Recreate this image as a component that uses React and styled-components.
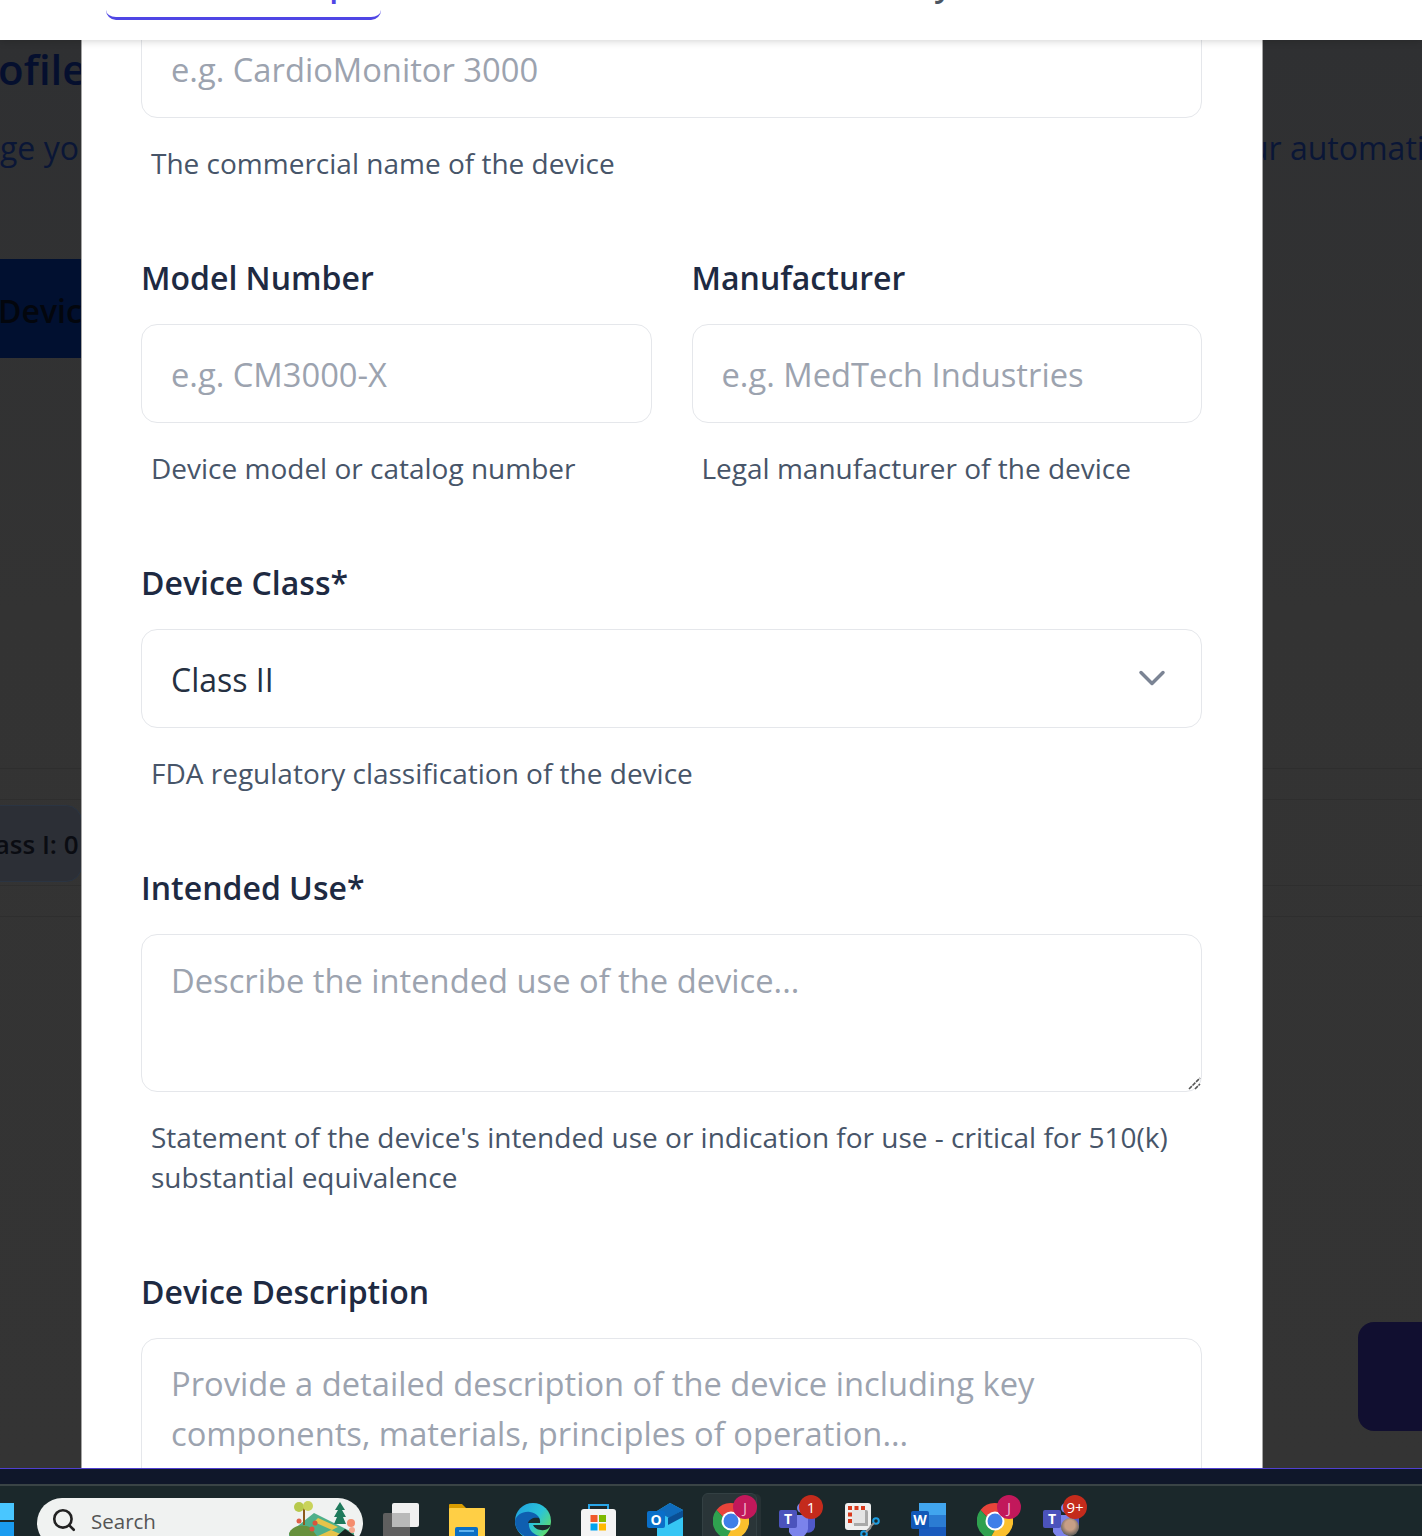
import React from "react";
import styled, { createGlobalStyle } from "styled-components";
import { Search, ChevronDown } from "lucide-react";

const GlobalStyle = createGlobalStyle`
  html, body { margin: 0; padding: 0; }
  body { font-family: "Open Sans", "Noto Sans", sans-serif; background: #0f172a; }
  * { box-sizing: border-box; }
`;

function TaskViewIcon() {
  return (
    <svg width="36" height="36" viewBox="0 0 36 36">
      <rect x="0" y="10" width="27" height="27" rx="2" fill="#5f5f5f" />
      <rect x="9" y="0" width="27" height="24" rx="2" fill="#f0f0f0" />
      <rect x="9" y="10" width="18" height="14" fill="#b9b9b9" />
    </svg>
  );
}

function FolderIcon() {
  return (
    <svg width="36" height="36" viewBox="0 0 36 36">
      <path d="M0 2a1 1 0 0 1 1-1h12l4 4h18a1 1 0 0 1 1 1v6H0z" fill="#d99c00" />
      <rect x="0" y="5" width="36" height="31" rx="1" fill="#ffcf45" />
      <rect x="6" y="24" width="23" height="13" rx="2" fill="#0b6fc4" />
      <rect x="10" y="27" width="15" height="2" fill="#5cb2ee" />
    </svg>
  );
}

function EdgeIcon() {
  return (
    <svg width="36" height="36" viewBox="0 0 36 36">
      <defs>
        <linearGradient id="edgeTop" x1="0" y1="0" x2="1" y2="0.7">
          <stop offset="0" stopColor="#1f9fe0" />
          <stop offset="0.6" stopColor="#2bc3d8" />
          <stop offset="1" stopColor="#5fdc6a" />
        </linearGradient>
      </defs>
      <circle cx="18" cy="18" r="18" fill="url(#edgeTop)" />
      <path d="M0 18c1-6 8-10 15-9 7 1 11 6 10 11H14c-1 6 4 12 11 13-3 2-6 3-9 2C7 34 0 27 0 18z" fill="#0f5fb0" />
      <path d="M13 20c1-4 6-6 11-5 1 2 1 3 1 5z" fill="#1b2a2d" />
      <path d="M36 20c0 5-5 8-10 7-4 0-7-3-8-5h18z" fill="#1b2a2d" />
    </svg>
  );
}

function StoreIcon() {
  return (
    <svg width="36" height="36" viewBox="0 0 36 36">
      <path d="M8 7V2h19v5" fill="none" stroke="#2aa6e8" strokeWidth="2" />
      <rect x="0" y="6" width="35" height="32" rx="3" fill="#f4f4f4" />
      <rect x="9.5" y="12" width="7" height="7" fill="#f0592a" />
      <rect x="18" y="12" width="7" height="7" fill="#7fba00" />
      <rect x="9.5" y="20.5" width="7" height="7" fill="#00a4ef" />
      <rect x="18" y="20.5" width="7" height="7" fill="#ffb900" />
    </svg>
  );
}

function OutlookIcon() {
  return (
    <svg width="36" height="36" viewBox="0 0 36 36">
      <path d="M10 8 23 0l13 7v26a3 3 0 0 1-3 3H13a3 3 0 0 1-3-3z" fill="#35c6f4" />
      <path d="M10 8 23 0l13 7-14 8z" fill="#0f6cbd" />
      <path d="M21 15 36 7v7l-15 8z" fill="#0a4f94" />
      <rect x="0" y="8" width="18" height="17" rx="2" fill="#0a6fc9" />
      <text x="9" y="22" textAnchor="middle" fontSize="14" fontWeight="700" fill="#fff" fontFamily="Open Sans">O</text>
    </svg>
  );
}

function ChromeIcon() {
  return (
    <svg width="36" height="36" viewBox="0 0 36 36">
      <path d="M18 0a18 18 0 0 1 15.6 9H18a9 9 0 0 0-8 5L3.500 7A18 18 0 0 1 18 0z" fill="#e8443a" />
      <path d="M3.500 7 10 14a9 9 0 0 0 8 13l-5 8.500A18 18 0 0 1 3.500 7z" fill="#2fa14f" />
      <path d="M33.600 9A18 18 0 0 1 13 35.500L18 27a9 9 0 0 0 7.800-13.500L33.600 9z" fill="#fbc02d" />
      <circle cx="18" cy="18" r="9.500" fill="#fff" />
      <circle cx="18" cy="18" r="7.500" fill="#3f7fe8" />
    </svg>
  );
}

function TeamsIcon() {
  return (
    <svg width="36" height="36" viewBox="0 0 36 36">
      <circle cx="23" cy="5" r="5" fill="#7b83eb" />
      <circle cx="31" cy="8" r="3.500" fill="#5059c9" />
      <path d="M26 13h8a2 2 0 0 1 2 2v9a7 7 0 0 1-10 5z" fill="#5059c9" />
      <path d="M10 12h17a2 2 0 0 1 2 2v12a10 10 0 0 1-19 3z" fill="#7b83eb" />
      <rect x="0" y="7" width="18" height="18" rx="2" fill="#4b53bc" />
      <text x="9" y="21" textAnchor="middle" fontSize="14" fontWeight="700" fill="#fff" fontFamily="Open Sans">T</text>
    </svg>
  );
}

function SnipIcon() {
  return (
    <svg width="36" height="36" viewBox="0 0 36 36">
      <rect x="0" y="0" width="26" height="27" rx="3" fill="#efefef" />
      <g fill="#d8391c">
        <rect x="3" y="3" width="4" height="4" />
        <rect x="9.500" y="3" width="4" height="4" />
        <rect x="16" y="3" width="4" height="4" />
        <rect x="3" y="9.500" width="4" height="4" />
        <rect x="3" y="16" width="4" height="4" />
      </g>
      <path d="M7 7h14a2 2 0 0 1 2 2v13H9a2 2 0 0 1-2-2z" fill="#e4e4e4" />
      <path d="M20 7h1a2 2 0 0 1 2 2v12h-3zM9 20h14v3H9z" fill="#a9a9a9" />
      <circle cx="31" cy="18" r="2.800" fill="none" stroke="#1b9de2" strokeWidth="2" />
      <circle cx="19" cy="31" r="2.800" fill="none" stroke="#1b9de2" strokeWidth="2" />
      <path d="m21 29 5-5M29 20l-4 4" stroke="#8d8d8d" strokeWidth="2" />
    </svg>
  );
}

function WordIcon() {
  return (
    <svg width="36" height="36" viewBox="0 0 36 36">
      <rect x="8" y="0" width="27" height="12" fill="#41a5ee" />
      <rect x="8" y="12" width="27" height="12" fill="#2b7cd3" />
      <rect x="8" y="24" width="27" height="12" fill="#185abd" />
      <rect x="0" y="8" width="18" height="18" rx="2" fill="#1258b8" />
      <text x="9" y="22" textAnchor="middle" fontSize="14" fontWeight="700" fill="#fff" fontFamily="Open Sans">W</text>
    </svg>
  );
}

function StartIcon() {
  return (
    <svg width="36" height="36" viewBox="0 0 36 36">
      <rect x="19" y="0" width="17" height="17" fill="#49c6ff" />
      <rect x="19" y="19" width="17" height="17" fill="#1a9cf0" />
    </svg>
  );
}

function SearchArt() {
  return (
    <svg width="74" height="38" viewBox="0 0 74 38">
      <path d="M2 35 27 15l40 20v3H2z" fill="#4fb08a" />
      <path d="M31 20 51 29l-6 3-18-8z" fill="#e6c34a" />
      <path d="M31 38l13-6 14 6z" fill="#e6c34a" />
      <path d="M2 36c2-8 14-11 22-6l6 8H3z" fill="#67913c" />
      <rect x="16" y="9" width="2" height="18" fill="#8a5a1c" />
      <circle cx="12" cy="9" r="5" fill="#b7c94c" />
      <circle cx="21" cy="8" r="5" fill="#c9d35a" />
      <path d="M53 4l5 8h-3l4 7h-3l3 7H47l3-7h-3l4-7h-3z" fill="#1f7a5c" />
      <circle cx="64" cy="25" r="4" fill="#f58d6e" />
      <circle cx="65" cy="32" r="3" fill="#f5a78e" />
      <circle cx="12" cy="23" r="2.500" fill="#e0604a" />
      <circle cx="28" cy="25" r="2.500" fill="#d9543e" />
      <circle cx="25" cy="31" r="2.500" fill="#d9543e" />
      <path d="M50 38 58 31l10 7z" fill="#16241f" />
    </svg>
  );
}

const dock = [
  { id: "taskview", Icon: TaskViewIcon },
  { id: "folder", Icon: FolderIcon },
  { id: "edge", Icon: EdgeIcon },
  { id: "store", Icon: StoreIcon },
  { id: "outlook", Icon: OutlookIcon },
  { id: "chrome", Icon: ChromeIcon, badge: "J", tone: "profile", active: true },
  { id: "teams", Icon: TeamsIcon, badge: "1", tone: "alert" },
  { id: "snip", Icon: SnipIcon },
  { id: "word", Icon: WordIcon },
  { id: "chrome2", Icon: ChromeIcon, badge: "J", tone: "profile" },
  { id: "teams2", Icon: TeamsIcon, badge: "9+", tone: "alert", avatar: true },
];

function Field({ label, hint, children }) {
  return (
    <FieldWrap>
      {label && <Label>{label}</Label>}
      {children}
      {hint && <Hint>{hint}</Hint>}
    </FieldWrap>
  );
}

export default function App() {
  return (
    <Screen>
      <GlobalStyle />
      <TopBar>
        <ActiveTab>Device Setup</ActiveTab>
        <Tab>Documents</Tab>
        <Tab>Safety</Tab>
      </TopBar>

      <Stage>
        <PageTitle>Device Profiles</PageTitle>
        <Subtitle>
          <span>Manage your</span>
          <span>your automations</span>
        </Subtitle>
        <DeviceTab>Device</DeviceTab>
        <StatsBand>
          <StatsRow>
            <StatChip>Class I: 0</StatChip>
          </StatsRow>
        </StatsBand>
        <CornerButton />

        <Modal>
          <FormBody>
            <Field hint="The commercial name of the device">
              <TextInput placeholder="e.g. CardioMonitor 3000" />
            </Field>
            <TwoCols>
              <Field label="Model Number" hint="Device model or catalog number">
                <TextInput placeholder="e.g. CM3000-X" />
              </Field>
              <Field label="Manufacturer" hint="Legal manufacturer of the device">
                <TextInput placeholder="e.g. MedTech Industries" />
              </Field>
            </TwoCols>
            <Field label="Device Class*" hint="FDA regulatory classification of the device">
              <ControlWrap>
                <SelectBox defaultValue="II">
                  <option value="I">Class I</option>
                  <option value="II">Class II</option>
                  <option value="III">Class III</option>
                </SelectBox>
                <Chevron size={44} strokeWidth={1.9} />
              </ControlWrap>
            </Field>
            <Field
              label="Intended Use*"
              hint="Statement of the device's intended use or indication for use - critical for 510(k) substantial equivalence"
            >
              <ControlWrap>
                <TextArea placeholder="Describe the intended use of the device..." />
                <ResizeGrip width="13" height="13" viewBox="0 0 13 13">
                  <path d="M1 12 12 1M7 12l5-5" stroke="#555" strokeWidth="1.6" strokeDasharray="4 1" fill="none" />
                </ResizeGrip>
              </ControlWrap>
            </Field>
            <Field label="Device Description">
              <TextArea
                $tall
                placeholder="Provide a detailed description of the device including key components, materials, principles of operation..."
              />
            </Field>
          </FormBody>
        </Modal>
      </Stage>

      <AccentLine />
      <Strip />

      <Taskbar>
        <StartSlot>
          <StartIcon />
        </StartSlot>
        <SearchPill>
          <Search size={26} strokeWidth={2.4} color="#222" />
          <SearchText>Search</SearchText>
          <ArtSlot>
            <SearchArt />
          </ArtSlot>
        </SearchPill>
        <Dock>
          {dock.map(({ id, Icon, badge, tone, active, avatar }) => (
            <DockItem key={id} $active={active}>
              <Icon />
              {avatar && <Avatar />}
              {badge && <Badge $tone={tone}>{badge}</Badge>}
            </DockItem>
          ))}
        </Dock>
      </Taskbar>
    </Screen>
  );
}

const Screen = styled.div`
  width: 1422px;
  height: 1536px;
  display: flex;
  flex-direction: column;
  overflow: hidden;
`;

const TopBar = styled.header`
  height: 40px;
  flex: none;
  background: #fff;
  display: flex;
  align-items: flex-end;
  gap: 95px;
  padding-left: 106px;
  overflow: hidden;
  position: relative;
  z-index: 2;
  box-shadow: 0 1px 8px rgba(0, 0, 0, 0.18);
  clip-path: inset(0 0 -12px 0);
`;

const Tab = styled.div`
  flex: none;
  height: 60px;
  margin-bottom: 20px;
  padding: 0 36px;
  font-size: 32px;
  line-height: 48px;
  font-weight: 600;
  color: #4b5563;
  white-space: nowrap;
`;

const ActiveTab = styled(Tab)`
  width: 275px;
  padding: 0 0 0 12px;
  text-align: center;
  color: #4f46e5;
  border-bottom: 3px solid #4f46e5;
  border-radius: 0 0 10px 10px;
`;

const Stage = styled.main`
  flex: none;
  height: 1428px;
  position: relative;
  overflow: hidden;
  background: linear-gradient(#2f3032, #333 40%, #343434);
  display: flex;
  flex-direction: column;
`;

const PageTitle = styled.h1`
  margin: 0 0 0 -191px;
  height: 58px;
  font-size: 42px;
  line-height: 58px;
  font-weight: 600;
  color: #050f2e;
  white-space: nowrap;
`;

const Subtitle = styled.p`
  margin: 28px 0 0 -84px;
  height: 44px;
  font-size: 32px;
  line-height: 44px;
  color: #0a1636;
  white-space: nowrap;
  display: flex;
  gap: 1102px;
`;

const DeviceTab = styled.div`
  margin-top: 89px;
  width: 120px;
  height: 99px;
  text-indent: -2px;
  background: #011030;
  color: #03060d;
  font-size: 32px;
  font-weight: 600;
  line-height: 103px;
  white-space: nowrap;
`;

const StatsBand = styled.section`
  margin-top: 410px;
  padding: 30px 0;
  border-top: 1px solid #2e2e2e;
  border-bottom: 1px solid #2e2e2e;
`;

const StatsRow = styled.div`
  height: 87px;
  padding: 5px 0;
  border-top: 1px solid #2e2e2e;
  border-bottom: 1px solid #2e2e2e;
`;

const StatChip = styled.div`
  width: 120px;
  height: 77px;
  margin-left: -38px;
  padding-left: 8px;
  border: 1px solid #2a3442;
  border-radius: 16px;
  background: #2c2f36;
  color: #0a0c12;
  font-size: 26px;
  font-weight: 600;
  line-height: 76px;
  white-space: nowrap;
`;

const CornerButton = styled.div`
  position: absolute;
  right: 0;
  top: 1282px;
  width: 64px;
  height: 109px;
  background: #110f30;
  border-radius: 16px 0 0 16px;
`;

const Modal = styled.section`
  position: absolute;
  top: 0;
  bottom: 0;
  left: 81px;
  width: 1182px;
  background: #fff;
  border-left: 1px solid #a5a5a5;
  border-right: 1px solid #a5a5a5;
  padding: 0 60px 0 59px;
  overflow: hidden;
`;

const FormBody = styled.div`
  margin-top: -21px;
  display: flex;
  flex-direction: column;
  gap: 71px;
`;

const TwoCols = styled.div`
  display: grid;
  grid-template-columns: 1fr 1fr;
  gap: 40px;
`;

const FieldWrap = styled.div`
  display: flex;
  flex-direction: column;
`;

const Label = styled.label`
  font-size: 32px;
  line-height: 48px;
  font-weight: 600;
  color: #1e2a42;
  margin-bottom: 22px;
`;

const Hint = styled.p`
  margin: 25px 0 0 10px;
  font-size: 28px;
  line-height: 40px;
  color: #475569;
`;

const controlStyles = `
  width: 100%;
  border: 1px solid #e5e7eb;
  border-radius: 16px;
  background: #fff;
  font-family: "Open Sans", "Noto Sans", sans-serif;
  font-size: 32.7px;
  color: #253041;
  outline: none;
  &::placeholder { color: #9ca3af; opacity: 1; }
`;

const TextInput = styled.input`
  ${controlStyles}
  height: 99px;
  padding: 2px 29px 0;
`;

const ControlWrap = styled.div`
  position: relative;
`;

const SelectBox = styled.select`
  ${controlStyles}
  display: block;
  height: 99px;
  padding: 2px 29px 0;
  font-size: 32px;
  appearance: none;
`;

const Chevron = styled(ChevronDown)`
  position: absolute;
  right: 28px;
  top: 27px;
  color: #7b8494;
`;

const TextArea = styled.textarea`
  ${controlStyles}
  display: block;
  height: ${(p) => (p.$tall ? "200px" : "158px")};
  padding: ${(p) => (p.$tall ? "20px" : "21px")} 29px;
  line-height: 50px;
  resize: none;
`;

const ResizeGrip = styled.svg`
  position: absolute;
  right: 1px;
  bottom: 2px;
`;

const AccentLine = styled.div`
  height: 1px;
  flex: none;
  background: #4f3fd0;
`;

const Strip = styled.div`
  height: 15px;
  flex: none;
  background: #0f172a;
`;

const Taskbar = styled.footer`
  height: 52px;
  flex: none;
  display: flex;
  align-items: flex-start;
  padding-top: 12px;
  margin-left: -22px;
  gap: 23px;
  background: #1b282b;
  border-top: 2px solid #3a4446;
  overflow: hidden;
`;

const StartSlot = styled.div`
  flex: none;
  padding-top: 5px;
`;

const SearchPill = styled.div`
  width: 326px;
  height: 50px;
  flex: none;
  display: flex;
  align-items: flex-start;
  padding: 9px 0 0 14px;
  border-radius: 25px;
  background: #f0f2f1;
  position: relative;
`;

const ArtSlot = styled.div`
  position: absolute;
  right: 2px;
  top: 0;
`;

const SearchText = styled.span`
  margin: -1px 0 0 14px;
  font-size: 20.5px;
  line-height: 30px;
  color: #555;
`;

const Dock = styled.div`
  display: flex;
  gap: 30px;
  margin-left: -3px;
  padding-top: 5px;
`;

const DockItem = styled.div`
  width: 36px;
  height: 36px;
  flex: none;
  position: relative;
  &::before {
    content: "";
    display: ${(p) => (p.$active ? "block" : "none")};
    position: absolute;
    left: -11px;
    top: -10px;
    width: 53px;
    height: 60px;
    border-radius: 6px;
    background: #2a3538;
    border: 1px solid #334043;
    box-shadow: 5px 0 0 -1px #263134;
  }
  & > svg {
    position: relative;
    display: block;
  }
`;

const Badge = styled.span`
  position: absolute;
  left: 20px;
  top: -8px;
  width: 24px;
  height: 24px;
  border-radius: 50%;
  background: ${(p) => (p.$tone === "alert" ? "#c42b1c" : "#c2185b")};
  color: ${(p) => (p.$tone === "alert" ? "#fff" : "#f3b6cf")};
  font-size: 15px;
  line-height: 24px;
  text-align: center;
`;

const Avatar = styled.span`
  position: absolute;
  left: 18px;
  top: 15px;
  width: 18px;
  height: 18px;
  border-radius: 50%;
  background: radial-gradient(circle at 50% 40%, #c79f86 0 35%, #6b6660 70%);
`;
